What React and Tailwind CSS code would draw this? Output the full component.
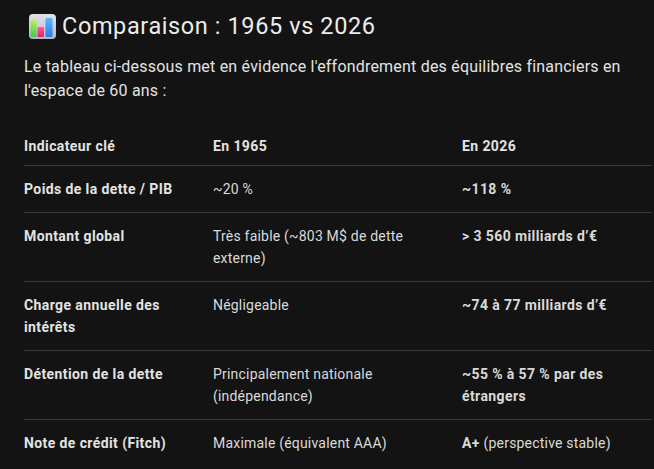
const ROWS = [
  {
    label: 'Poids de la dette / PIB',
    before: '~20 %',
    after: <strong className="font-bold tracking-[0.4px]">~118 %</strong>,
  },
  {
    label: 'Montant global',
    before: 'Très faible (~803 M$ de dette externe)',
    after: <strong className="font-bold tracking-[0.4px]">&gt; 3 560 milliards d’€</strong>,
  },
  {
    label: 'Charge annuelle des intérêts',
    before: 'Négligeable',
    after: <strong className="font-bold tracking-[0.4px]">~74 à 77 milliards d’€</strong>,
  },
  {
    label: 'Détention de la dette',
    before: 'Principalement nationale (indépendance)',
    after: <strong className="font-bold tracking-[0.4px]">~55 % à 57 % par des étrangers</strong>,
  },
  {
    label: 'Note de crédit (Fitch)',
    before: 'Maximale (équivalent AAA)',
    after: (
      <>
        <strong className="font-bold tracking-[0.4px]">A+</strong> (perspective stable)
      </>
    ),
  },
];

function ChartEmoji() {
  return (
    <svg width="27" height="25" viewBox="0 0 27 25" className="shrink-0">
      <defs>
        <linearGradient id="bg" x1="0" y1="0" x2="0" y2="1">
          <stop offset="0" stopColor="#e4e1ee" />
          <stop offset="1" stopColor="#b8b4c8" />
        </linearGradient>
        <linearGradient id="g" x1="0" y1="0" x2="0" y2="1">
          <stop offset="0" stopColor="#b8f25a" />
          <stop offset="1" stopColor="#43c94a" />
        </linearGradient>
        <linearGradient id="p" x1="0" y1="0" x2="0" y2="1">
          <stop offset="0" stopColor="#ff5c9a" />
          <stop offset="1" stopColor="#e0206a" />
        </linearGradient>
        <linearGradient id="b" x1="0" y1="0" x2="0" y2="1">
          <stop offset="0" stopColor="#5cb8ff" />
          <stop offset="1" stopColor="#2a7de0" />
        </linearGradient>
      </defs>
      <rect x="0" y="0" width="27" height="25" rx="4" fill="url(#bg)" />
      <rect x="1.5" y="6" width="6" height="17" rx="1" fill="url(#g)" />
      <rect x="8.5" y="13" width="6.5" height="10" rx="1" fill="url(#p)" />
      <rect x="16.5" y="4" width="7" height="19" rx="1" fill="url(#b)" />
    </svg>
  );
}

export default function App() {
  return (
    <div
      className="min-h-[469px] w-full bg-[#131313] pl-6 pr-[2px] pt-[10px] text-[#e3e3e3]"
      style={{ fontFamily: 'Roboto, "Noto Sans", sans-serif' }}
    >
      <div className="flex h-8 items-center gap-[6px] pl-[5px]">
        <ChartEmoji />
        <h2 className="text-[23.5px] font-normal leading-8 tracking-[0.6px] text-[#ececec]">Comparaison : 1965 vs 2026</h2>
      </div>

      <p className="mt-[13px] pr-6 text-[16px] leading-6 tracking-[0.2px]">
        Le tableau ci-dessous met en évidence l'effondrement des équilibres financiers en l'espace de 60 ans :
      </p>

      <table className="mt-5 w-full table-fixed border-collapse text-left text-[14px] leading-[22px]">
        <colgroup>
          <col className="w-[189px]" />
          <col className="w-[249px]" />
          <col />
        </colgroup>
        <thead>
          <tr className="border-b border-[#3c3c3c] tracking-[0.4px]">
            <th className="pb-2 pt-3 pr-4 font-bold">Indicateur clé</th>
            <th className="pb-2 pt-3 pr-4 font-bold">En 1965</th>
            <th className="pb-2 pt-3 pr-4 font-bold">En 2026</th>
          </tr>
        </thead>
        <tbody>
          {ROWS.map((row) => (
            <tr key={row.label} className="border-b border-[#3c3c3c] align-top last:border-b-0">
              <td className="py-3 pr-4 font-bold tracking-[0.4px]">{row.label}</td>
              <td className="py-3 pr-4 tracking-[0.2px] text-[#dadada]">{row.before}</td>
              <td className="py-3 pr-4 tracking-[0.2px] text-[#dadada]">{row.after}</td>
            </tr>
          ))}
        </tbody>
      </table>
    </div>
  );
}
